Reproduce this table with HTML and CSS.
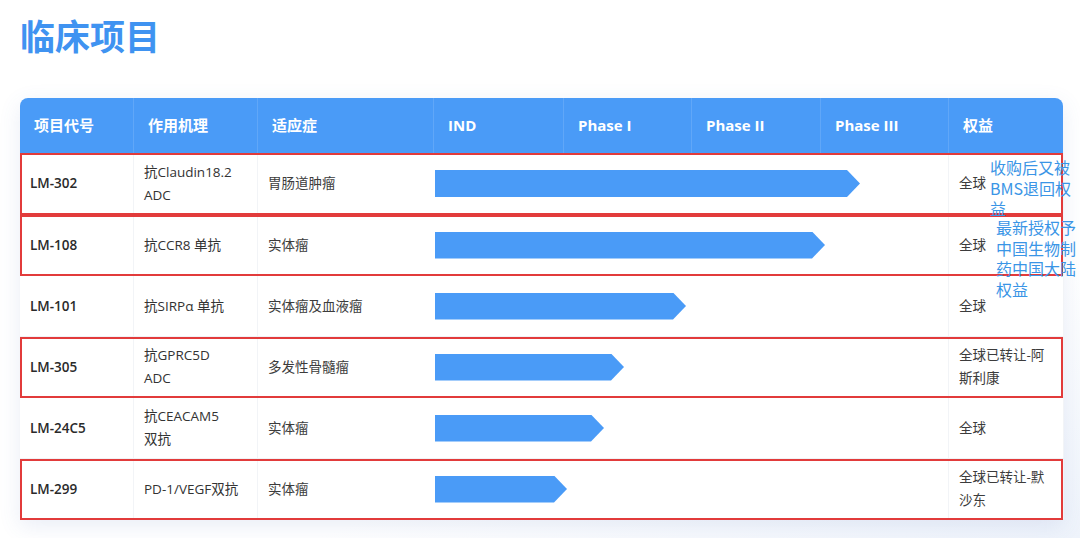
FILE: index.html
```html
<!DOCTYPE html>
<html lang="zh-CN">
<head>
  <meta charset="utf-8">
  <title>临床项目</title>
  <link rel="stylesheet" href="styles.css">
</head>
<body>
  <div class="page">
    <h1 class="title">临床项目</h1>

    <div class="pipeline">
      <div class="row head">
        <div class="cell">项目代号</div>
        <div class="cell">作用机理</div>
        <div class="cell">适应症</div>
        <div class="cell">IND</div>
        <div class="cell">Phase I</div>
        <div class="cell">Phase II</div>
        <div class="cell">Phase III</div>
        <div class="cell">权益</div>
      </div>

      <div class="row marked first">
        <div class="cell code">LM-302</div>
        <div class="cell mech">抗Claudin18.2 ADC</div>
        <div class="cell">胃肠道肿瘤</div>
        <div class="cell phase"></div>
        <div class="cell phase"></div>
        <div class="cell phase"></div>
        <div class="cell phase"></div>
        <div class="track"><div class="bar" style="width: 425px"></div></div>
        <div class="cell rights">全球</div>
      </div>

      <div class="row marked second">
        <div class="cell code">LM-108</div>
        <div class="cell mech">抗CCR8 单抗</div>
        <div class="cell">实体瘤</div>
        <div class="cell phase"></div>
        <div class="cell phase"></div>
        <div class="cell phase"></div>
        <div class="cell phase"></div>
        <div class="track"><div class="bar" style="width: 390px"></div></div>
        <div class="cell rights">全球</div>
      </div>

      <div class="row">
        <div class="cell code">LM-101</div>
        <div class="cell mech">抗SIRPα 单抗</div>
        <div class="cell">实体瘤及血液瘤</div>
        <div class="cell phase"></div>
        <div class="cell phase"></div>
        <div class="cell phase"></div>
        <div class="cell phase"></div>
        <div class="track"><div class="bar" style="width: 251px"></div></div>
        <div class="cell rights">全球</div>
      </div>

      <div class="row marked">
        <div class="cell code">LM-305</div>
        <div class="cell mech">抗GPRC5D<br>ADC</div>
        <div class="cell">多发性骨髓瘤</div>
        <div class="cell phase"></div>
        <div class="cell phase"></div>
        <div class="cell phase"></div>
        <div class="cell phase"></div>
        <div class="track"><div class="bar" style="width: 189px"></div></div>
        <div class="cell rights">全球已转让-阿斯利康</div>
      </div>

      <div class="row">
        <div class="cell code">LM-24C5</div>
        <div class="cell mech">抗CEACAM5<br>双抗</div>
        <div class="cell">实体瘤</div>
        <div class="cell phase"></div>
        <div class="cell phase"></div>
        <div class="cell phase"></div>
        <div class="cell phase"></div>
        <div class="track"><div class="bar" style="width: 169px"></div></div>
        <div class="cell rights">全球</div>
      </div>

      <div class="row marked last">
        <div class="cell code">LM-299</div>
        <div class="cell mech">PD-1/VEGF双抗</div>
        <div class="cell">实体瘤</div>
        <div class="cell phase"></div>
        <div class="cell phase"></div>
        <div class="cell phase"></div>
        <div class="cell phase"></div>
        <div class="track"><div class="bar" style="width: 132px"></div></div>
        <div class="cell rights">全球已转让-默沙东</div>
      </div>

      <!-- handwritten notes over the rights column -->
      <div class="note note-bms">收购后又被BMS退回权益</div>
      <div class="note note-cn">最新授权予中国生物制药中国大陆权益</div>
    </div>
  </div>
</body>
</html>
```

FILE: styles.css
```css
body {
  margin: 0;
  background: #ffffff;
  font-family: "Open Sans", "Noto Sans CJK SC", sans-serif;
  overflow: hidden;
}

.page {
  width: 1080px;
  height: 538px;
  padding: 14px 0 0 20px;
  box-sizing: border-box;
  overflow: hidden;
  background: linear-gradient(160deg, #ffffff 70%, #eef3fb 100%);
}

.title {
  margin: 0;
  font-family: "Noto Sans CJK SC", sans-serif;
  font-size: 35px;
  line-height: 42px;
  font-weight: 700;
  color: #3f93f1;
}

.pipeline {
  position: relative;
  width: 1043px;
  margin-top: 42px;
  background: #ffffff;
  border-radius: 8px 8px 0 0;
  box-shadow: 0 6px 22px rgba(70, 110, 180, 0.12);
}

.row {
  display: grid;
  grid-template-columns: 113px 124px 176px 130px 128px 129px 128px 115px;
  height: 61px;
  box-sizing: border-box;
  border-bottom: 1px solid #f0f2f6;
  color: #3c3c3c;
  font-size: 13.5px;
}

.row.head {
  height: 55px;
  background: #4a9bf7;
  border-radius: 8px 8px 0 0;
  border-bottom: none;
  color: #ffffff;
  font-size: 15px;
  font-weight: 700;
}

.row.head .cell {
  padding-left: 14px;
  border-left: 1px solid rgba(255, 255, 255, 0.12);
}

.row.head .cell:first-child {
  border-left: none;
}

.cell {
  grid-row: 1;
  display: flex;
  align-items: center;
  padding: 0 10px;
  border-left: 1px solid #f2f4f7;
  line-height: 23px;
}

.cell:first-child {
  border-left: none;
}

.code {
  color: #2a2a2a;
  font-weight: 600;
}

.mech {
  color: #333;
}

.rights {
  grid-column: 8;
  padding-right: 14px;
}

.track {
  grid-column: 4 / 8;
  grid-row: 1;
  display: flex;
  align-items: center;
  padding-left: 2px;
}

.bar {
  height: 27px;
  background: #4a9bf7;
  clip-path: polygon(0 0, calc(100% - 13px) 0, 100% 50%, calc(100% - 13px) 100%, 0 100%);
}

.row.marked {
  outline: 2px solid #e23b3b;
  outline-offset: -2px;
}

.row.marked.first {
  height: 62px;
}

.note {
  position: absolute;
  font-family: "Noto Sans CJK SC", sans-serif;
  font-size: 16px;
  line-height: 20.5px;
  color: #3a95e6;
}

.note-bms {
  left: 970px;
  top: 59px;
  width: 82px;
}

.note-cn {
  left: 976px;
  top: 119px;
  width: 81px;
}
```
